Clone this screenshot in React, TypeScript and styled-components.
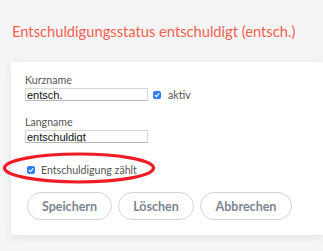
import React from "react";
import styled, { createGlobalStyle } from "styled-components";

const Global = createGlobalStyle`
  html, body { margin: 0; padding: 0; background: #f5f5f7; }
  body { font-family: Lato, "Noto Sans", sans-serif; width: 323px; height: 251px; overflow: hidden; }
`;

const Page = styled.div`
  padding: 22px 0 0 11px;
`;

const Title = styled.h1`
  margin: 0 0 22px 1px;
  font-size: 14.7px;
  font-weight: 400;
  color: #f2614e;
  line-height: 18px;
`;

const Card = styled.div`
  background: #fff;
  padding: 12px 14px 15px 14px;
  box-shadow: 0 2px 8px rgba(0, 0, 0, 0.08);
  box-sizing: border-box;
`;

const Label = styled.div<{ $top?: number }>`
  font-size: 10.6px;
  color: #555;
  line-height: 13px;
  margin-top: ${(p) => p.$top ?? 0}px;
`;

const Row = styled.div`
  display: flex;
  align-items: center;
  gap: 5px;
  margin-top: 1px;
`;

const Input = styled.input`
  width: 123px;
  height: 13px;
  box-sizing: border-box;
  border: 1px solid #d6d6d6;
  border-bottom-color: #b8b8b8;
  padding: 0 1px;
  font-family: "Liberation Sans", Arial, sans-serif;
  font-size: 11px;
  color: #111;
  outline: none;
  margin: 0;
`;

const Box = styled.span`
  display: inline-block;
  width: 8px;
  height: 8px;
  border-radius: 2px;
  background: #2f7cf6;
  position: relative;
  flex: none;
  svg { position: absolute; left: 0; top: 0; }
`;

const Check = () => (
  <Box>
    <svg width="8" height="8" viewBox="0 0 8 8">
      <path d="M1.8 4.2 L3.3 5.7 L6.2 2.3" fill="none" stroke="#fff" strokeWidth="1.2" />
    </svg>
  </Box>
);

const CheckText = styled.span`
  font-size: 10.6px;
  color: #555;
  margin-left: 2px;
`;

const CheckRow = styled.div`
  display: flex;
  align-items: center;
  gap: 4px;
  margin: 20px 0 0 2px;
  height: 13px;
  position: relative;
`;

const Ellipse = styled.svg`
  position: absolute;
  left: -25px;
  top: -11px;
  pointer-events: none;
`;

const Buttons = styled.div`
  display: flex;
  gap: 6px;
  margin: 16px 0 0 2px;
`;

const Button = styled.button<{ $w: number }>`
  width: ${(p) => p.$w}px;
  height: 28px;
  border: 1px solid #cfd3d7;
  border-radius: 14px;
  background: #fff;
  color: #7c8691;
  font-family: Lato, "Noto Sans", sans-serif;
  font-weight: 700;
  font-size: 12.5px;
  padding: 0;
`;

export default function App() {
  return (
    <>
      <Global />
      <Page>
        <Title>Entschuldigungsstatus entschuldigt (entsch.)</Title>
        <Card>
          <Label>Kurzname</Label>
          <Row>
            <Input defaultValue="entsch." />
            <Check />
            <CheckText>aktiv</CheckText>
          </Row>
          <Label $top={15}>Langname</Label>
          <Row>
            <Input defaultValue="entschuldigt" />
          </Row>
          <CheckRow>
            <Check />
            <CheckText>Entschuldigung zählt</CheckText>
            <Ellipse width="156" height="34" viewBox="0 0 156 34">
              <ellipse cx="77" cy="16" rx="74.5" ry="14" fill="none" stroke="#ee1c24" strokeWidth="3.2" />
            </Ellipse>
          </CheckRow>
          <Buttons>
            <Button $w={85}>Speichern</Button>
            <Button $w={76}>Löschen</Button>
            <Button $w={92}>Abbrechen</Button>
          </Buttons>
        </Card>
      </Page>
    </>
  );
}
